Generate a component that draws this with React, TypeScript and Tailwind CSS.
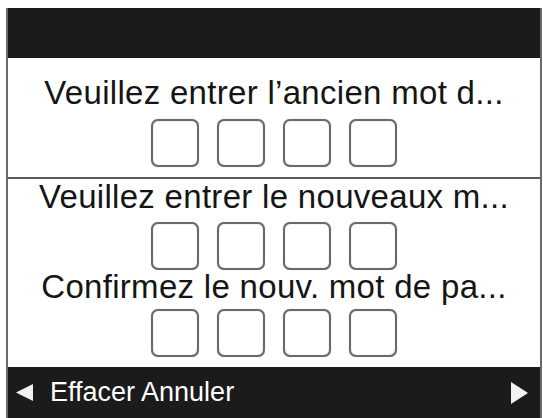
import React from "react";

function Boxes({ mt }: { mt: string }) {
  return (
    <div className={`flex justify-center gap-[18px] ${mt}`}>
      {[0, 1, 2, 3].map((i) => (
        <div
          key={i}
          className="w-[48px] h-[48px] rounded-[7px] border-2 border-[#6a6a6a] bg-white shadow-[inset_0_0_1px_#999,0_0_1px_#aaa]"
        />
      ))}
    </div>
  );
}

export default function App() {
  return (
    <div className="w-[543px] h-[418px] bg-white overflow-hidden pt-[8px]" style={{ fontFamily: '"Liberation Sans", Arial, sans-serif' }}>
      <div className="ml-[6px] w-[536px] h-[410px] flex flex-col border-x-2 border-[#6a6a6a]">
        <div className="h-[50px] bg-[#1b1a1a]" />
        <div className="h-[121px] border-b-2 border-[#5a5a5a] pt-[20px] flex flex-col">
          <div className="text-[33px] leading-[30px] tracking-[0.3px] text-[#151515] text-center">Veuillez entrer l’ancien mot d...</div>
          <Boxes mt="mt-[11px]" />
        </div>
        <div className="h-[188px] pt-[3px] flex flex-col">
          <div className="text-[33px] leading-[30px] tracking-[0.3px] text-[#151515] text-center">Veuillez entrer le nouveaux m...</div>
          <Boxes mt="mt-[10px]" />
          <div className="mt-[2px] text-[33px] leading-[30px] tracking-[0.3px] text-[#151515] text-center">Confirmez le nouv. mot de pa...</div>
          <Boxes mt="mt-[7px]" />
        </div>
        <div className="flex-1 bg-[#1c1b1b] flex items-center text-white">
          <svg width="19" height="18" viewBox="0 0 19 18" className="ml-[7px]">
            <polygon points="18,0 18,17 1,8.5" fill="#f2f2f2" />
          </svg>
          <span className="ml-[16px] text-[27px] leading-none">Effacer Annuler</span>
          <svg width="18" height="22" viewBox="0 0 18 22" className="ml-auto mr-[12px]">
            <polygon points="1,0 1,22 18,11" fill="#f2f2f2" />
          </svg>
        </div>
      </div>
    </div>
  );
}
